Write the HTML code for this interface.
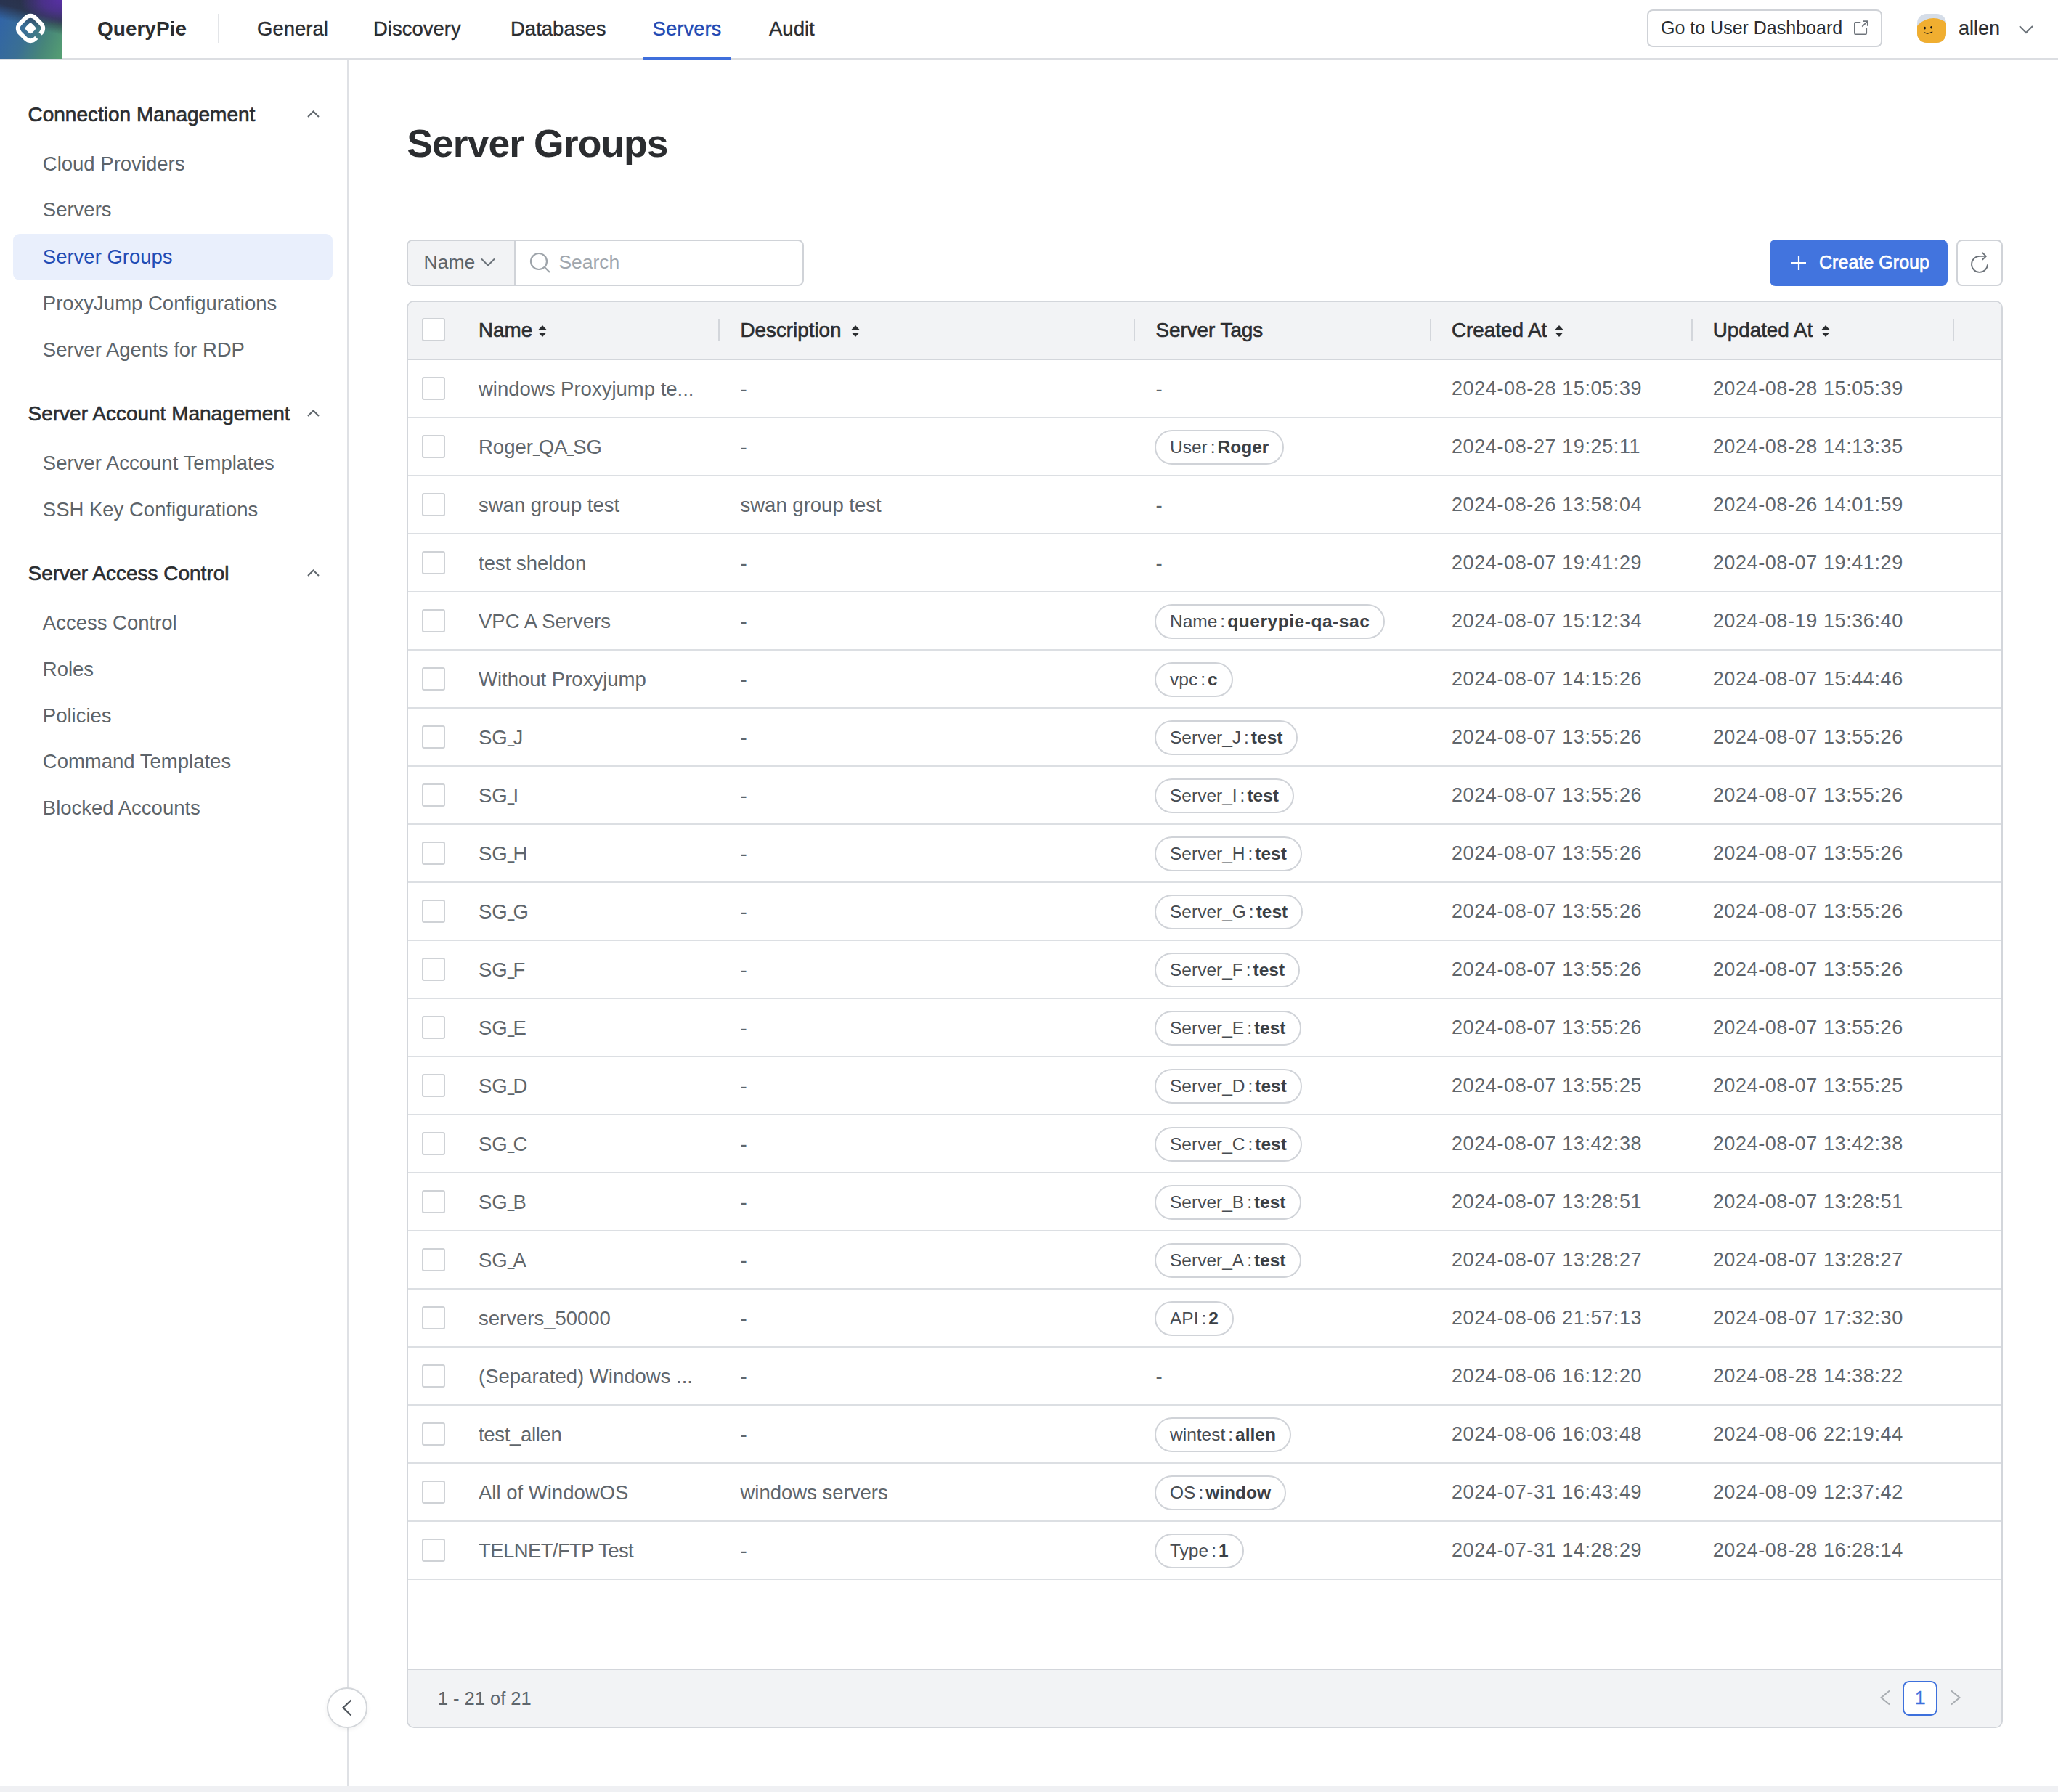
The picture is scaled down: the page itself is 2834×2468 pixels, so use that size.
<!DOCTYPE html>
<html><head><meta charset="utf-8">
<style>
*{box-sizing:border-box;margin:0;padding:0}
html,body{width:2834px;height:2468px;overflow:hidden;background:#fff;font-family:"Liberation Sans",sans-serif}
.t{position:absolute;white-space:nowrap}
.a{position:absolute}
svg{position:absolute;overflow:visible}
.u{display:inline-block;transform:scaleX(.6);transform-origin:0 0;margin-right:-7.5px;position:relative;top:-3px}
</style></head><body>

<div class="a" style="left:0;top:80px;width:2834px;height:2px;background:#dcdee2"></div>
<div class="a" style="left:0;top:0;width:86px;height:81px;background:
radial-gradient(ellipse 80% 50% at 100% 0%, rgba(88,48,165,1) 0%, rgba(88,48,165,0.7) 40%, rgba(88,48,165,0) 85%),
linear-gradient(195deg, rgba(40,44,66,0.95) 0%, rgba(40,44,66,0.85) 27%, rgba(40,44,66,0) 47%),
linear-gradient(112deg, #2f62ab 0%, #3a6f94 45%, #478679 72%, #56a072 100%);"></div>
<svg style="left:0;top:0" width="86" height="81" viewBox="0 0 86 81">
<g transform="rotate(45 42 39)">
<rect x="27.15" y="24.15" width="29.7" height="29.7" rx="9.2" fill="none" stroke="#fff" stroke-width="5.94" stroke-dasharray="27.08 7.5 200" />
<rect x="36.05" y="33.05" width="11.9" height="11.9" rx="3.5" fill="#fff"/>
</g></svg>
<div class="t" style="left:134px;top:22.80px;font-size:28px;line-height:33.6px;color:#2b2d30;font-weight:700;letter-spacing:0px;">QueryPie</div>
<div class="a" style="left:300px;top:19px;width:2px;height:40px;background:#e3e5e8"></div>
<div class="t" style="left:354px;top:23.27px;font-size:27.5px;line-height:33.0px;color:#2b2d30;font-weight:400;letter-spacing:0px;-webkit-text-stroke:0.35px #2b2d30">General</div>
<div class="t" style="left:514px;top:23.27px;font-size:27.5px;line-height:33.0px;color:#2b2d30;font-weight:400;letter-spacing:0px;-webkit-text-stroke:0.35px #2b2d30">Discovery</div>
<div class="t" style="left:703px;top:23.27px;font-size:27.5px;line-height:33.0px;color:#2b2d30;font-weight:400;letter-spacing:0px;-webkit-text-stroke:0.35px #2b2d30">Databases</div>
<div class="t" style="left:898.6px;top:23.27px;font-size:27.5px;line-height:33.0px;color:#2149b3;font-weight:400;letter-spacing:0px;-webkit-text-stroke:0.35px #2149b3">Servers</div>
<div class="t" style="left:1059px;top:23.27px;font-size:27.5px;line-height:33.0px;color:#2b2d30;font-weight:400;letter-spacing:0px;-webkit-text-stroke:0.35px #2b2d30">Audit</div>
<div class="a" style="left:886px;top:78px;width:120px;height:4px;background:#3f6fdc"></div>
<div class="a" style="left:2268px;top:13px;width:324px;height:52px;border:2px solid #cfd2d7;border-radius:8px;background:#fff"></div>
<div class="t" style="left:2287px;top:23.34px;font-size:25px;line-height:30.0px;color:#2b2d30;font-weight:400;letter-spacing:0px;">Go to User Dashboard</div>
<svg style="left:2553px;top:28px" width="20" height="20" viewBox="0 0 20 20">
<path d="M8.6 2.75 H2.3 Q0.8 2.75 0.8 4.25 V17.7 Q0.8 19.2 2.3 19.2 H15.8 Q17.3 19.2 17.3 17.7 V11.1" fill="none" stroke="#6e747b" stroke-width="1.6" stroke-linecap="round"/>
<path d="M12.1 1.1 H18.75 V7.75 M18.75 1.1 L11.25 8.64" fill="none" stroke="#6e747b" stroke-width="1.65"/>
</svg>
<div class="a" style="left:2640px;top:19px;width:40px;height:40px;border-radius:13px;overflow:hidden;background:#d5dde8">
<div class="a" style="left:-5.8px;top:5.9px;width:57.2px;height:57.2px;border-radius:50%;background:#f0ae30"></div>
</div>
<svg style="left:2640px;top:19px" width="40" height="40" viewBox="0 0 40 40">
<ellipse cx="10.5" cy="19.6" rx="1.4" ry="1.9" fill="#111"/>
<ellipse cx="19.6" cy="18.8" rx="1.4" ry="1.8" fill="#111"/>
<path d="M10.6 26 Q14.5 28.3 20.7 25" fill="none" stroke="#111" stroke-width="1.4" stroke-linecap="round"/></svg>
<div class="t" style="left:2697px;top:23.44px;font-size:27px;line-height:32.4px;color:#2b2d30;font-weight:400;letter-spacing:0px;-webkit-text-stroke:0.2px #2b2d30">allen</div>
<svg style="left:2780px;top:35px" width="20" height="11" viewBox="0 0 20 11">
<path d="M1 1 L10 10 L19 1" fill="none" stroke="#6c737a" stroke-width="2"/></svg>
<div class="a" style="left:478px;top:82px;width:2px;height:2378px;background:#dfe1e5"></div>
<div class="a" style="left:18px;top:322px;width:440px;height:64px;border-radius:9px;background:#e9effc"></div>
<div class="t" style="left:38.5px;top:141.30px;font-size:28px;line-height:33.6px;color:#2b2d30;font-weight:400;letter-spacing:0px;-webkit-text-stroke:0.65px #2b2d30">Connection Management</div>
<svg style="left:423px;top:152.3px" width="17" height="10" viewBox="0 0 17 10"><path d="M1 9 L8.5 1.5 L16 9" fill="none" stroke="#5f666c" stroke-width="2"/></svg>
<div class="t" style="left:38.5px;top:552.90px;font-size:28px;line-height:33.6px;color:#2b2d30;font-weight:400;letter-spacing:0px;-webkit-text-stroke:0.65px #2b2d30">Server Account Management</div>
<svg style="left:423px;top:563.9px" width="17" height="10" viewBox="0 0 17 10"><path d="M1 9 L8.5 1.5 L16 9" fill="none" stroke="#5f666c" stroke-width="2"/></svg>
<div class="t" style="left:38.5px;top:773.00px;font-size:28px;line-height:33.6px;color:#2b2d30;font-weight:400;letter-spacing:0px;-webkit-text-stroke:0.65px #2b2d30">Server Access Control</div>
<svg style="left:423px;top:784.0px" width="17" height="10" viewBox="0 0 17 10"><path d="M1 9 L8.5 1.5 L16 9" fill="none" stroke="#5f666c" stroke-width="2"/></svg>
<div class="t" style="left:58.8px;top:208.67px;font-size:27.5px;line-height:33.0px;color:#5d646a;font-weight:400;letter-spacing:0px;">Cloud Providers</div>
<div class="t" style="left:58.8px;top:272.37px;font-size:27.5px;line-height:33.0px;color:#5d646a;font-weight:400;letter-spacing:0px;">Servers</div>
<div class="t" style="left:58.8px;top:336.57px;font-size:27.5px;line-height:33.0px;color:#1f4cb5;font-weight:400;letter-spacing:0px;">Server Groups</div>
<div class="t" style="left:58.8px;top:400.57px;font-size:27.5px;line-height:33.0px;color:#5d646a;font-weight:400;letter-spacing:0px;">ProxyJump Configurations</div>
<div class="t" style="left:58.8px;top:464.77px;font-size:27.5px;line-height:33.0px;color:#5d646a;font-weight:400;letter-spacing:0px;">Server Agents for RDP</div>
<div class="t" style="left:58.8px;top:620.57px;font-size:27.5px;line-height:33.0px;color:#5d646a;font-weight:400;letter-spacing:0px;">Server Account Templates</div>
<div class="t" style="left:58.8px;top:684.67px;font-size:27.5px;line-height:33.0px;color:#5d646a;font-weight:400;letter-spacing:0px;">SSH Key Configurations</div>
<div class="t" style="left:58.8px;top:840.97px;font-size:27.5px;line-height:33.0px;color:#5d646a;font-weight:400;letter-spacing:0px;">Access Control</div>
<div class="t" style="left:58.8px;top:905.27px;font-size:27.5px;line-height:33.0px;color:#5d646a;font-weight:400;letter-spacing:0px;">Roles</div>
<div class="t" style="left:58.8px;top:968.97px;font-size:27.5px;line-height:33.0px;color:#5d646a;font-weight:400;letter-spacing:0px;">Policies</div>
<div class="t" style="left:58.8px;top:1032.37px;font-size:27.5px;line-height:33.0px;color:#5d646a;font-weight:400;letter-spacing:0px;">Command Templates</div>
<div class="t" style="left:58.8px;top:1096.47px;font-size:27.5px;line-height:33.0px;color:#5d646a;font-weight:400;letter-spacing:0px;">Blocked Accounts</div>
<div class="a" style="left:450px;top:2324px;width:56px;height:56px;border-radius:50%;border:2px solid #d3d6da;background:#fff;box-shadow:0 2px 6px rgba(0,0,0,0.06)"></div>
<svg style="left:470px;top:2340px" width="16" height="24" viewBox="0 0 16 24">
<path d="M13.5 1.5 L2.5 12 L13.5 22.5" fill="none" stroke="#50565d" stroke-width="2.2"/></svg>
<div class="a" style="left:0;top:2460px;width:2834px;height:8px;background:#eff0f3"></div>
<div class="t" style="left:560.3px;top:166.36px;font-size:53.5px;line-height:64.2px;color:#2b2d30;font-weight:700;letter-spacing:-0.95px;">Server Groups</div>
<div class="a" style="left:560px;top:330px;width:547px;height:64px;border:2px solid #d0d3d8;border-radius:8px;background:#fff;overflow:hidden"><div class="a" style="left:0;top:0;width:148px;height:60px;background:#f2f3f5;border-right:2px solid #d0d3d8"></div></div>
<div class="t" style="left:583.5px;top:345.92px;font-size:26.5px;line-height:31.8px;color:#5d646a;font-weight:400;letter-spacing:0px;">Name</div>
<svg style="left:662px;top:355px" width="20" height="12" viewBox="0 0 20 12">
<path d="M1 1.5 L10 10.5 L19 1.5" fill="none" stroke="#6c737a" stroke-width="2"/></svg>
<svg style="left:728px;top:346px" width="32" height="32" viewBox="0 0 32 32">
<circle cx="14" cy="14" r="11" fill="none" stroke="#9ea4aa" stroke-width="2.2"/>
<path d="M22 22 L29 29" stroke="#9ea4aa" stroke-width="2.2"/></svg>
<div class="t" style="left:769.4px;top:345.92px;font-size:26.5px;line-height:31.8px;color:#a0a6ad;font-weight:400;letter-spacing:0px;">Search</div>
<div class="a" style="left:2437px;top:330px;width:245px;height:64px;border-radius:8px;background:#4274de"></div>
<svg style="left:2467px;top:352px" width="20" height="20" viewBox="0 0 20 20">
<path d="M10 0 V20 M0 10 H20" stroke="#fff" stroke-width="2.2"/></svg>
<div class="t" style="left:2505px;top:346.24px;font-size:25.1px;line-height:30.12px;color:#ffffff;font-weight:400;letter-spacing:0px;-webkit-text-stroke:0.6px #fff">Create Group</div>
<div class="a" style="left:2694px;top:330px;width:64px;height:64px;border:2px solid #d0d3d8;border-radius:8px;background:#fff"></div>
<svg style="left:2712px;top:346px" width="30" height="32" viewBox="0 0 30 32">
<path d="M25 18.3 A11 11 0 1 1 14 6.9 L22.6 6.9" fill="none" stroke="#6b7178" stroke-width="1.85"/>
<path d="M17.8 1.9 L22.8 6.9 L17.8 11.9" fill="none" stroke="#6b7178" stroke-width="1.85"/></svg>
<div class="a" style="left:560px;top:414px;width:2198px;height:1966px;border:2px solid #d3d6db;border-radius:10px;background:#fff;overflow:hidden"><div class="a" style="left:0;top:0;width:100%;height:80px;background:#f2f3f5;border-bottom:2px solid #d3d6db"></div><div class="a" style="left:0;top:1882px;width:100%;height:80px;background:#f2f3f5;border-top:2px solid #d3d6db"></div></div>
<div class="a" style="left:581px;top:438px;width:32px;height:32px;border:2px solid #cfd2d6;border-radius:3px;background:#fff"></div>
<div class="t" style="left:659px;top:437.69px;font-size:27.8px;line-height:33.36px;color:#2b2d30;font-weight:400;letter-spacing:0px;-webkit-text-stroke:0.65px #2b2d30">Name</div>
<div class="t" style="left:1019.5px;top:437.69px;font-size:27.8px;line-height:33.36px;color:#2b2d30;font-weight:400;letter-spacing:0px;-webkit-text-stroke:0.65px #2b2d30">Description</div>
<div class="t" style="left:1591.4px;top:437.69px;font-size:27.8px;line-height:33.36px;color:#2b2d30;font-weight:400;letter-spacing:0px;-webkit-text-stroke:0.65px #2b2d30">Server Tags</div>
<div class="t" style="left:1999px;top:437.69px;font-size:27.8px;line-height:33.36px;color:#2b2d30;font-weight:400;letter-spacing:0px;-webkit-text-stroke:0.65px #2b2d30">Created At</div>
<div class="t" style="left:2358.7px;top:437.69px;font-size:27.8px;line-height:33.36px;color:#2b2d30;font-weight:400;letter-spacing:0px;-webkit-text-stroke:0.65px #2b2d30">Updated At</div>
<div class="a" style="left:989px;top:440px;width:2px;height:30px;background:#d3d6db"></div>
<div class="a" style="left:1561px;top:440px;width:2px;height:30px;background:#d3d6db"></div>
<div class="a" style="left:1969px;top:440px;width:2px;height:30px;background:#d3d6db"></div>
<div class="a" style="left:2329px;top:440px;width:2px;height:30px;background:#d3d6db"></div>
<div class="a" style="left:2689px;top:440px;width:2px;height:30px;background:#d3d6db"></div>
<svg style="left:741px;top:448px" width="12" height="16" viewBox="0 0 12 16"><path d="M6 0 L11.5 6 H0.5 Z M0.5 10 H11.5 L6 16 Z" fill="#2b2d30"/></svg>
<svg style="left:1172px;top:448px" width="12" height="16" viewBox="0 0 12 16"><path d="M6 0 L11.5 6 H0.5 Z M0.5 10 H11.5 L6 16 Z" fill="#2b2d30"/></svg>
<svg style="left:2141.4px;top:448px" width="12" height="16" viewBox="0 0 12 16"><path d="M6 0 L11.5 6 H0.5 Z M0.5 10 H11.5 L6 16 Z" fill="#2b2d30"/></svg>
<svg style="left:2508px;top:448px" width="12" height="16" viewBox="0 0 12 16"><path d="M6 0 L11.5 6 H0.5 Z M0.5 10 H11.5 L6 16 Z" fill="#2b2d30"/></svg>
<div class="a" style="left:562px;top:574px;width:2194px;height:2px;background:#dcdfe3"></div>
<div class="a" style="left:581px;top:519px;width:32px;height:32px;border:2px solid #cfd2d6;border-radius:3px;background:#fff"></div>
<div class="t" style="left:659px;top:518.97px;font-size:27.5px;line-height:33.0px;color:#5f666c;font-weight:400;letter-spacing:0px;">windows Proxyjump te...</div>
<div class="t" style="left:1019.5px;top:518.97px;font-size:27.5px;line-height:33.0px;color:#5f666c;font-weight:400;letter-spacing:0px;">-</div>
<div class="t" style="left:1591.4px;top:518.97px;font-size:27.5px;line-height:33.0px;color:#5f666c;font-weight:400;letter-spacing:0px;">-</div>
<div class="t" style="left:1999px;top:519.44px;font-size:27px;line-height:32.4px;color:#5f666c;font-weight:400;letter-spacing:0.6px;">2024-08-28 15:05:39</div>
<div class="t" style="left:2358.7px;top:519.44px;font-size:27px;line-height:32.4px;color:#5f666c;font-weight:400;letter-spacing:0.6px;">2024-08-28 15:05:39</div>
<div class="a" style="left:562px;top:654px;width:2194px;height:2px;background:#dcdfe3"></div>
<div class="a" style="left:581px;top:599px;width:32px;height:32px;border:2px solid #cfd2d6;border-radius:3px;background:#fff"></div>
<div class="t" style="left:659px;top:598.97px;font-size:27.5px;line-height:33.0px;color:#5f666c;font-weight:400;letter-spacing:0px;">Roger<span class="u">_</span>QA<span class="u">_</span>SG</div>
<div class="t" style="left:1019.5px;top:598.97px;font-size:27.5px;line-height:33.0px;color:#5f666c;font-weight:400;letter-spacing:0px;">-</div>
<div class="a" style="left:1590px;top:592px;height:48px;border:2px solid #d0d3d8;border-radius:24px;padding:0 19px;display:flex;align-items:center;white-space:nowrap;font-size:24.5px;background:#fff"><span style="color:#474c52">User</span><span style="color:#474c52;margin:0 3px 0 4px">:</span><span style="color:#3b4045;font-weight:700;letter-spacing:0px">Roger</span></div>
<div class="t" style="left:1999px;top:599.44px;font-size:27px;line-height:32.4px;color:#5f666c;font-weight:400;letter-spacing:0.6px;">2024-08-27 19:25:11</div>
<div class="t" style="left:2358.7px;top:599.44px;font-size:27px;line-height:32.4px;color:#5f666c;font-weight:400;letter-spacing:0.6px;">2024-08-28 14:13:35</div>
<div class="a" style="left:562px;top:734px;width:2194px;height:2px;background:#dcdfe3"></div>
<div class="a" style="left:581px;top:679px;width:32px;height:32px;border:2px solid #cfd2d6;border-radius:3px;background:#fff"></div>
<div class="t" style="left:659px;top:678.97px;font-size:27.5px;line-height:33.0px;color:#5f666c;font-weight:400;letter-spacing:0px;">swan group test</div>
<div class="t" style="left:1019.5px;top:678.97px;font-size:27.5px;line-height:33.0px;color:#5f666c;font-weight:400;letter-spacing:0px;">swan group test</div>
<div class="t" style="left:1591.4px;top:678.97px;font-size:27.5px;line-height:33.0px;color:#5f666c;font-weight:400;letter-spacing:0px;">-</div>
<div class="t" style="left:1999px;top:679.44px;font-size:27px;line-height:32.4px;color:#5f666c;font-weight:400;letter-spacing:0.6px;">2024-08-26 13:58:04</div>
<div class="t" style="left:2358.7px;top:679.44px;font-size:27px;line-height:32.4px;color:#5f666c;font-weight:400;letter-spacing:0.6px;">2024-08-26 14:01:59</div>
<div class="a" style="left:562px;top:814px;width:2194px;height:2px;background:#dcdfe3"></div>
<div class="a" style="left:581px;top:759px;width:32px;height:32px;border:2px solid #cfd2d6;border-radius:3px;background:#fff"></div>
<div class="t" style="left:659px;top:758.97px;font-size:27.5px;line-height:33.0px;color:#5f666c;font-weight:400;letter-spacing:0px;">test sheldon</div>
<div class="t" style="left:1019.5px;top:758.97px;font-size:27.5px;line-height:33.0px;color:#5f666c;font-weight:400;letter-spacing:0px;">-</div>
<div class="t" style="left:1591.4px;top:758.97px;font-size:27.5px;line-height:33.0px;color:#5f666c;font-weight:400;letter-spacing:0px;">-</div>
<div class="t" style="left:1999px;top:759.44px;font-size:27px;line-height:32.4px;color:#5f666c;font-weight:400;letter-spacing:0.6px;">2024-08-07 19:41:29</div>
<div class="t" style="left:2358.7px;top:759.44px;font-size:27px;line-height:32.4px;color:#5f666c;font-weight:400;letter-spacing:0.6px;">2024-08-07 19:41:29</div>
<div class="a" style="left:562px;top:894px;width:2194px;height:2px;background:#dcdfe3"></div>
<div class="a" style="left:581px;top:839px;width:32px;height:32px;border:2px solid #cfd2d6;border-radius:3px;background:#fff"></div>
<div class="t" style="left:659px;top:838.97px;font-size:27.5px;line-height:33.0px;color:#5f666c;font-weight:400;letter-spacing:0px;">VPC A Servers</div>
<div class="t" style="left:1019.5px;top:838.97px;font-size:27.5px;line-height:33.0px;color:#5f666c;font-weight:400;letter-spacing:0px;">-</div>
<div class="a" style="left:1590px;top:832px;height:48px;border:2px solid #d0d3d8;border-radius:24px;padding:0 19px;display:flex;align-items:center;white-space:nowrap;font-size:24.5px;background:#fff"><span style="color:#474c52">Name</span><span style="color:#474c52;margin:0 3px 0 4px">:</span><span style="color:#3b4045;font-weight:700;letter-spacing:0.55px">querypie-qa-sac</span></div>
<div class="t" style="left:1999px;top:839.44px;font-size:27px;line-height:32.4px;color:#5f666c;font-weight:400;letter-spacing:0.6px;">2024-08-07 15:12:34</div>
<div class="t" style="left:2358.7px;top:839.44px;font-size:27px;line-height:32.4px;color:#5f666c;font-weight:400;letter-spacing:0.6px;">2024-08-19 15:36:40</div>
<div class="a" style="left:562px;top:974px;width:2194px;height:2px;background:#dcdfe3"></div>
<div class="a" style="left:581px;top:919px;width:32px;height:32px;border:2px solid #cfd2d6;border-radius:3px;background:#fff"></div>
<div class="t" style="left:659px;top:918.97px;font-size:27.5px;line-height:33.0px;color:#5f666c;font-weight:400;letter-spacing:0px;">Without Proxyjump</div>
<div class="t" style="left:1019.5px;top:918.97px;font-size:27.5px;line-height:33.0px;color:#5f666c;font-weight:400;letter-spacing:0px;">-</div>
<div class="a" style="left:1590px;top:912px;height:48px;border:2px solid #d0d3d8;border-radius:24px;padding:0 19px;display:flex;align-items:center;white-space:nowrap;font-size:24.5px;background:#fff"><span style="color:#474c52">vpc</span><span style="color:#474c52;margin:0 3px 0 4px">:</span><span style="color:#3b4045;font-weight:700;letter-spacing:0px">c</span></div>
<div class="t" style="left:1999px;top:919.44px;font-size:27px;line-height:32.4px;color:#5f666c;font-weight:400;letter-spacing:0.6px;">2024-08-07 14:15:26</div>
<div class="t" style="left:2358.7px;top:919.44px;font-size:27px;line-height:32.4px;color:#5f666c;font-weight:400;letter-spacing:0.6px;">2024-08-07 15:44:46</div>
<div class="a" style="left:562px;top:1054px;width:2194px;height:2px;background:#dcdfe3"></div>
<div class="a" style="left:581px;top:999px;width:32px;height:32px;border:2px solid #cfd2d6;border-radius:3px;background:#fff"></div>
<div class="t" style="left:659px;top:998.97px;font-size:27.5px;line-height:33.0px;color:#5f666c;font-weight:400;letter-spacing:0px;">SG<span class="u">_</span>J</div>
<div class="t" style="left:1019.5px;top:998.97px;font-size:27.5px;line-height:33.0px;color:#5f666c;font-weight:400;letter-spacing:0px;">-</div>
<div class="a" style="left:1590px;top:992px;height:48px;border:2px solid #d0d3d8;border-radius:24px;padding:0 19px;display:flex;align-items:center;white-space:nowrap;font-size:24.5px;background:#fff"><span style="color:#474c52">Server_J</span><span style="color:#474c52;margin:0 3px 0 4px">:</span><span style="color:#3b4045;font-weight:700;letter-spacing:0px">test</span></div>
<div class="t" style="left:1999px;top:999.44px;font-size:27px;line-height:32.4px;color:#5f666c;font-weight:400;letter-spacing:0.6px;">2024-08-07 13:55:26</div>
<div class="t" style="left:2358.7px;top:999.44px;font-size:27px;line-height:32.4px;color:#5f666c;font-weight:400;letter-spacing:0.6px;">2024-08-07 13:55:26</div>
<div class="a" style="left:562px;top:1134px;width:2194px;height:2px;background:#dcdfe3"></div>
<div class="a" style="left:581px;top:1079px;width:32px;height:32px;border:2px solid #cfd2d6;border-radius:3px;background:#fff"></div>
<div class="t" style="left:659px;top:1078.97px;font-size:27.5px;line-height:33.0px;color:#5f666c;font-weight:400;letter-spacing:0px;">SG<span class="u">_</span>I</div>
<div class="t" style="left:1019.5px;top:1078.97px;font-size:27.5px;line-height:33.0px;color:#5f666c;font-weight:400;letter-spacing:0px;">-</div>
<div class="a" style="left:1590px;top:1072px;height:48px;border:2px solid #d0d3d8;border-radius:24px;padding:0 19px;display:flex;align-items:center;white-space:nowrap;font-size:24.5px;background:#fff"><span style="color:#474c52">Server_I</span><span style="color:#474c52;margin:0 3px 0 4px">:</span><span style="color:#3b4045;font-weight:700;letter-spacing:0px">test</span></div>
<div class="t" style="left:1999px;top:1079.44px;font-size:27px;line-height:32.4px;color:#5f666c;font-weight:400;letter-spacing:0.6px;">2024-08-07 13:55:26</div>
<div class="t" style="left:2358.7px;top:1079.44px;font-size:27px;line-height:32.4px;color:#5f666c;font-weight:400;letter-spacing:0.6px;">2024-08-07 13:55:26</div>
<div class="a" style="left:562px;top:1214px;width:2194px;height:2px;background:#dcdfe3"></div>
<div class="a" style="left:581px;top:1159px;width:32px;height:32px;border:2px solid #cfd2d6;border-radius:3px;background:#fff"></div>
<div class="t" style="left:659px;top:1158.97px;font-size:27.5px;line-height:33.0px;color:#5f666c;font-weight:400;letter-spacing:0px;">SG<span class="u">_</span>H</div>
<div class="t" style="left:1019.5px;top:1158.97px;font-size:27.5px;line-height:33.0px;color:#5f666c;font-weight:400;letter-spacing:0px;">-</div>
<div class="a" style="left:1590px;top:1152px;height:48px;border:2px solid #d0d3d8;border-radius:24px;padding:0 19px;display:flex;align-items:center;white-space:nowrap;font-size:24.5px;background:#fff"><span style="color:#474c52">Server_H</span><span style="color:#474c52;margin:0 3px 0 4px">:</span><span style="color:#3b4045;font-weight:700;letter-spacing:0px">test</span></div>
<div class="t" style="left:1999px;top:1159.44px;font-size:27px;line-height:32.4px;color:#5f666c;font-weight:400;letter-spacing:0.6px;">2024-08-07 13:55:26</div>
<div class="t" style="left:2358.7px;top:1159.44px;font-size:27px;line-height:32.4px;color:#5f666c;font-weight:400;letter-spacing:0.6px;">2024-08-07 13:55:26</div>
<div class="a" style="left:562px;top:1294px;width:2194px;height:2px;background:#dcdfe3"></div>
<div class="a" style="left:581px;top:1239px;width:32px;height:32px;border:2px solid #cfd2d6;border-radius:3px;background:#fff"></div>
<div class="t" style="left:659px;top:1238.97px;font-size:27.5px;line-height:33.0px;color:#5f666c;font-weight:400;letter-spacing:0px;">SG<span class="u">_</span>G</div>
<div class="t" style="left:1019.5px;top:1238.97px;font-size:27.5px;line-height:33.0px;color:#5f666c;font-weight:400;letter-spacing:0px;">-</div>
<div class="a" style="left:1590px;top:1232px;height:48px;border:2px solid #d0d3d8;border-radius:24px;padding:0 19px;display:flex;align-items:center;white-space:nowrap;font-size:24.5px;background:#fff"><span style="color:#474c52">Server_G</span><span style="color:#474c52;margin:0 3px 0 4px">:</span><span style="color:#3b4045;font-weight:700;letter-spacing:0px">test</span></div>
<div class="t" style="left:1999px;top:1239.44px;font-size:27px;line-height:32.4px;color:#5f666c;font-weight:400;letter-spacing:0.6px;">2024-08-07 13:55:26</div>
<div class="t" style="left:2358.7px;top:1239.44px;font-size:27px;line-height:32.4px;color:#5f666c;font-weight:400;letter-spacing:0.6px;">2024-08-07 13:55:26</div>
<div class="a" style="left:562px;top:1374px;width:2194px;height:2px;background:#dcdfe3"></div>
<div class="a" style="left:581px;top:1319px;width:32px;height:32px;border:2px solid #cfd2d6;border-radius:3px;background:#fff"></div>
<div class="t" style="left:659px;top:1318.97px;font-size:27.5px;line-height:33.0px;color:#5f666c;font-weight:400;letter-spacing:0px;">SG<span class="u">_</span>F</div>
<div class="t" style="left:1019.5px;top:1318.97px;font-size:27.5px;line-height:33.0px;color:#5f666c;font-weight:400;letter-spacing:0px;">-</div>
<div class="a" style="left:1590px;top:1312px;height:48px;border:2px solid #d0d3d8;border-radius:24px;padding:0 19px;display:flex;align-items:center;white-space:nowrap;font-size:24.5px;background:#fff"><span style="color:#474c52">Server_F</span><span style="color:#474c52;margin:0 3px 0 4px">:</span><span style="color:#3b4045;font-weight:700;letter-spacing:0px">test</span></div>
<div class="t" style="left:1999px;top:1319.44px;font-size:27px;line-height:32.4px;color:#5f666c;font-weight:400;letter-spacing:0.6px;">2024-08-07 13:55:26</div>
<div class="t" style="left:2358.7px;top:1319.44px;font-size:27px;line-height:32.4px;color:#5f666c;font-weight:400;letter-spacing:0.6px;">2024-08-07 13:55:26</div>
<div class="a" style="left:562px;top:1454px;width:2194px;height:2px;background:#dcdfe3"></div>
<div class="a" style="left:581px;top:1399px;width:32px;height:32px;border:2px solid #cfd2d6;border-radius:3px;background:#fff"></div>
<div class="t" style="left:659px;top:1398.97px;font-size:27.5px;line-height:33.0px;color:#5f666c;font-weight:400;letter-spacing:0px;">SG<span class="u">_</span>E</div>
<div class="t" style="left:1019.5px;top:1398.97px;font-size:27.5px;line-height:33.0px;color:#5f666c;font-weight:400;letter-spacing:0px;">-</div>
<div class="a" style="left:1590px;top:1392px;height:48px;border:2px solid #d0d3d8;border-radius:24px;padding:0 19px;display:flex;align-items:center;white-space:nowrap;font-size:24.5px;background:#fff"><span style="color:#474c52">Server_E</span><span style="color:#474c52;margin:0 3px 0 4px">:</span><span style="color:#3b4045;font-weight:700;letter-spacing:0px">test</span></div>
<div class="t" style="left:1999px;top:1399.44px;font-size:27px;line-height:32.4px;color:#5f666c;font-weight:400;letter-spacing:0.6px;">2024-08-07 13:55:26</div>
<div class="t" style="left:2358.7px;top:1399.44px;font-size:27px;line-height:32.4px;color:#5f666c;font-weight:400;letter-spacing:0.6px;">2024-08-07 13:55:26</div>
<div class="a" style="left:562px;top:1534px;width:2194px;height:2px;background:#dcdfe3"></div>
<div class="a" style="left:581px;top:1479px;width:32px;height:32px;border:2px solid #cfd2d6;border-radius:3px;background:#fff"></div>
<div class="t" style="left:659px;top:1478.97px;font-size:27.5px;line-height:33.0px;color:#5f666c;font-weight:400;letter-spacing:0px;">SG<span class="u">_</span>D</div>
<div class="t" style="left:1019.5px;top:1478.97px;font-size:27.5px;line-height:33.0px;color:#5f666c;font-weight:400;letter-spacing:0px;">-</div>
<div class="a" style="left:1590px;top:1472px;height:48px;border:2px solid #d0d3d8;border-radius:24px;padding:0 19px;display:flex;align-items:center;white-space:nowrap;font-size:24.5px;background:#fff"><span style="color:#474c52">Server_D</span><span style="color:#474c52;margin:0 3px 0 4px">:</span><span style="color:#3b4045;font-weight:700;letter-spacing:0px">test</span></div>
<div class="t" style="left:1999px;top:1479.44px;font-size:27px;line-height:32.4px;color:#5f666c;font-weight:400;letter-spacing:0.6px;">2024-08-07 13:55:25</div>
<div class="t" style="left:2358.7px;top:1479.44px;font-size:27px;line-height:32.4px;color:#5f666c;font-weight:400;letter-spacing:0.6px;">2024-08-07 13:55:25</div>
<div class="a" style="left:562px;top:1614px;width:2194px;height:2px;background:#dcdfe3"></div>
<div class="a" style="left:581px;top:1559px;width:32px;height:32px;border:2px solid #cfd2d6;border-radius:3px;background:#fff"></div>
<div class="t" style="left:659px;top:1558.97px;font-size:27.5px;line-height:33.0px;color:#5f666c;font-weight:400;letter-spacing:0px;">SG<span class="u">_</span>C</div>
<div class="t" style="left:1019.5px;top:1558.97px;font-size:27.5px;line-height:33.0px;color:#5f666c;font-weight:400;letter-spacing:0px;">-</div>
<div class="a" style="left:1590px;top:1552px;height:48px;border:2px solid #d0d3d8;border-radius:24px;padding:0 19px;display:flex;align-items:center;white-space:nowrap;font-size:24.5px;background:#fff"><span style="color:#474c52">Server_C</span><span style="color:#474c52;margin:0 3px 0 4px">:</span><span style="color:#3b4045;font-weight:700;letter-spacing:0px">test</span></div>
<div class="t" style="left:1999px;top:1559.44px;font-size:27px;line-height:32.4px;color:#5f666c;font-weight:400;letter-spacing:0.6px;">2024-08-07 13:42:38</div>
<div class="t" style="left:2358.7px;top:1559.44px;font-size:27px;line-height:32.4px;color:#5f666c;font-weight:400;letter-spacing:0.6px;">2024-08-07 13:42:38</div>
<div class="a" style="left:562px;top:1694px;width:2194px;height:2px;background:#dcdfe3"></div>
<div class="a" style="left:581px;top:1639px;width:32px;height:32px;border:2px solid #cfd2d6;border-radius:3px;background:#fff"></div>
<div class="t" style="left:659px;top:1638.97px;font-size:27.5px;line-height:33.0px;color:#5f666c;font-weight:400;letter-spacing:0px;">SG<span class="u">_</span>B</div>
<div class="t" style="left:1019.5px;top:1638.97px;font-size:27.5px;line-height:33.0px;color:#5f666c;font-weight:400;letter-spacing:0px;">-</div>
<div class="a" style="left:1590px;top:1632px;height:48px;border:2px solid #d0d3d8;border-radius:24px;padding:0 19px;display:flex;align-items:center;white-space:nowrap;font-size:24.5px;background:#fff"><span style="color:#474c52">Server_B</span><span style="color:#474c52;margin:0 3px 0 4px">:</span><span style="color:#3b4045;font-weight:700;letter-spacing:0px">test</span></div>
<div class="t" style="left:1999px;top:1639.44px;font-size:27px;line-height:32.4px;color:#5f666c;font-weight:400;letter-spacing:0.6px;">2024-08-07 13:28:51</div>
<div class="t" style="left:2358.7px;top:1639.44px;font-size:27px;line-height:32.4px;color:#5f666c;font-weight:400;letter-spacing:0.6px;">2024-08-07 13:28:51</div>
<div class="a" style="left:562px;top:1774px;width:2194px;height:2px;background:#dcdfe3"></div>
<div class="a" style="left:581px;top:1719px;width:32px;height:32px;border:2px solid #cfd2d6;border-radius:3px;background:#fff"></div>
<div class="t" style="left:659px;top:1718.97px;font-size:27.5px;line-height:33.0px;color:#5f666c;font-weight:400;letter-spacing:0px;">SG<span class="u">_</span>A</div>
<div class="t" style="left:1019.5px;top:1718.97px;font-size:27.5px;line-height:33.0px;color:#5f666c;font-weight:400;letter-spacing:0px;">-</div>
<div class="a" style="left:1590px;top:1712px;height:48px;border:2px solid #d0d3d8;border-radius:24px;padding:0 19px;display:flex;align-items:center;white-space:nowrap;font-size:24.5px;background:#fff"><span style="color:#474c52">Server_A</span><span style="color:#474c52;margin:0 3px 0 4px">:</span><span style="color:#3b4045;font-weight:700;letter-spacing:0px">test</span></div>
<div class="t" style="left:1999px;top:1719.44px;font-size:27px;line-height:32.4px;color:#5f666c;font-weight:400;letter-spacing:0.6px;">2024-08-07 13:28:27</div>
<div class="t" style="left:2358.7px;top:1719.44px;font-size:27px;line-height:32.4px;color:#5f666c;font-weight:400;letter-spacing:0.6px;">2024-08-07 13:28:27</div>
<div class="a" style="left:562px;top:1854px;width:2194px;height:2px;background:#dcdfe3"></div>
<div class="a" style="left:581px;top:1799px;width:32px;height:32px;border:2px solid #cfd2d6;border-radius:3px;background:#fff"></div>
<div class="t" style="left:659px;top:1798.97px;font-size:27.5px;line-height:33.0px;color:#5f666c;font-weight:400;letter-spacing:0px;">servers_50000</div>
<div class="t" style="left:1019.5px;top:1798.97px;font-size:27.5px;line-height:33.0px;color:#5f666c;font-weight:400;letter-spacing:0px;">-</div>
<div class="a" style="left:1590px;top:1792px;height:48px;border:2px solid #d0d3d8;border-radius:24px;padding:0 19px;display:flex;align-items:center;white-space:nowrap;font-size:24.5px;background:#fff"><span style="color:#474c52">API</span><span style="color:#474c52;margin:0 3px 0 4px">:</span><span style="color:#3b4045;font-weight:700;letter-spacing:0px">2</span></div>
<div class="t" style="left:1999px;top:1799.44px;font-size:27px;line-height:32.4px;color:#5f666c;font-weight:400;letter-spacing:0.6px;">2024-08-06 21:57:13</div>
<div class="t" style="left:2358.7px;top:1799.44px;font-size:27px;line-height:32.4px;color:#5f666c;font-weight:400;letter-spacing:0.6px;">2024-08-07 17:32:30</div>
<div class="a" style="left:562px;top:1934px;width:2194px;height:2px;background:#dcdfe3"></div>
<div class="a" style="left:581px;top:1879px;width:32px;height:32px;border:2px solid #cfd2d6;border-radius:3px;background:#fff"></div>
<div class="t" style="left:659px;top:1878.97px;font-size:27.5px;line-height:33.0px;color:#5f666c;font-weight:400;letter-spacing:0px;">(Separated) Windows ...</div>
<div class="t" style="left:1019.5px;top:1878.97px;font-size:27.5px;line-height:33.0px;color:#5f666c;font-weight:400;letter-spacing:0px;">-</div>
<div class="t" style="left:1591.4px;top:1878.97px;font-size:27.5px;line-height:33.0px;color:#5f666c;font-weight:400;letter-spacing:0px;">-</div>
<div class="t" style="left:1999px;top:1879.44px;font-size:27px;line-height:32.4px;color:#5f666c;font-weight:400;letter-spacing:0.6px;">2024-08-06 16:12:20</div>
<div class="t" style="left:2358.7px;top:1879.44px;font-size:27px;line-height:32.4px;color:#5f666c;font-weight:400;letter-spacing:0.6px;">2024-08-28 14:38:22</div>
<div class="a" style="left:562px;top:2014px;width:2194px;height:2px;background:#dcdfe3"></div>
<div class="a" style="left:581px;top:1959px;width:32px;height:32px;border:2px solid #cfd2d6;border-radius:3px;background:#fff"></div>
<div class="t" style="left:659px;top:1958.97px;font-size:27.5px;line-height:33.0px;color:#5f666c;font-weight:400;letter-spacing:-0.33px;">test_allen</div>
<div class="t" style="left:1019.5px;top:1958.97px;font-size:27.5px;line-height:33.0px;color:#5f666c;font-weight:400;letter-spacing:0px;">-</div>
<div class="a" style="left:1590px;top:1952px;height:48px;border:2px solid #d0d3d8;border-radius:24px;padding:0 19px;display:flex;align-items:center;white-space:nowrap;font-size:24.5px;background:#fff"><span style="color:#474c52">wintest</span><span style="color:#474c52;margin:0 3px 0 4px">:</span><span style="color:#3b4045;font-weight:700;letter-spacing:0px">allen</span></div>
<div class="t" style="left:1999px;top:1959.44px;font-size:27px;line-height:32.4px;color:#5f666c;font-weight:400;letter-spacing:0.6px;">2024-08-06 16:03:48</div>
<div class="t" style="left:2358.7px;top:1959.44px;font-size:27px;line-height:32.4px;color:#5f666c;font-weight:400;letter-spacing:0.6px;">2024-08-06 22:19:44</div>
<div class="a" style="left:562px;top:2094px;width:2194px;height:2px;background:#dcdfe3"></div>
<div class="a" style="left:581px;top:2039px;width:32px;height:32px;border:2px solid #cfd2d6;border-radius:3px;background:#fff"></div>
<div class="t" style="left:659px;top:2038.97px;font-size:27.5px;line-height:33.0px;color:#5f666c;font-weight:400;letter-spacing:0px;">All of WindowOS</div>
<div class="t" style="left:1019.5px;top:2038.97px;font-size:27.5px;line-height:33.0px;color:#5f666c;font-weight:400;letter-spacing:0px;">windows servers</div>
<div class="a" style="left:1590px;top:2032px;height:48px;border:2px solid #d0d3d8;border-radius:24px;padding:0 19px;display:flex;align-items:center;white-space:nowrap;font-size:24.5px;background:#fff"><span style="color:#474c52">OS</span><span style="color:#474c52;margin:0 3px 0 4px">:</span><span style="color:#3b4045;font-weight:700;letter-spacing:0px">window</span></div>
<div class="t" style="left:1999px;top:2039.44px;font-size:27px;line-height:32.4px;color:#5f666c;font-weight:400;letter-spacing:0.6px;">2024-07-31 16:43:49</div>
<div class="t" style="left:2358.7px;top:2039.44px;font-size:27px;line-height:32.4px;color:#5f666c;font-weight:400;letter-spacing:0.6px;">2024-08-09 12:37:42</div>
<div class="a" style="left:562px;top:2174px;width:2194px;height:2px;background:#dcdfe3"></div>
<div class="a" style="left:581px;top:2119px;width:32px;height:32px;border:2px solid #cfd2d6;border-radius:3px;background:#fff"></div>
<div class="t" style="left:659px;top:2118.97px;font-size:27.5px;line-height:33.0px;color:#5f666c;font-weight:400;letter-spacing:-0.6px;">TELNET/FTP Test</div>
<div class="t" style="left:1019.5px;top:2118.97px;font-size:27.5px;line-height:33.0px;color:#5f666c;font-weight:400;letter-spacing:0px;">-</div>
<div class="a" style="left:1590px;top:2112px;height:48px;border:2px solid #d0d3d8;border-radius:24px;padding:0 19px;display:flex;align-items:center;white-space:nowrap;font-size:24.5px;background:#fff"><span style="color:#474c52">Type</span><span style="color:#474c52;margin:0 3px 0 4px">:</span><span style="color:#3b4045;font-weight:700;letter-spacing:0px">1</span></div>
<div class="t" style="left:1999px;top:2119.44px;font-size:27px;line-height:32.4px;color:#5f666c;font-weight:400;letter-spacing:0.6px;">2024-07-31 14:28:29</div>
<div class="t" style="left:2358.7px;top:2119.44px;font-size:27px;line-height:32.4px;color:#5f666c;font-weight:400;letter-spacing:0.6px;">2024-08-28 16:28:14</div>
<div class="t" style="left:602.7px;top:2323.66px;font-size:25.5px;line-height:30.6px;color:#5f666c;font-weight:400;letter-spacing:0px;">1 - 21 of 21</div>
<svg style="left:2588px;top:2327px" width="16" height="22" viewBox="0 0 16 22">
<path d="M14 1.5 L2.5 11 L14 20.5" fill="none" stroke="#a9adb2" stroke-width="2"/></svg>
<div class="a" style="left:2620px;top:2315px;width:48px;height:48px;border:2px solid #3d70dc;border-radius:9px;background:#fff"></div>
<div class="t" style="left:2637px;top:2323.39px;font-size:26px;line-height:31.2px;color:#3d70dc;font-weight:400;letter-spacing:0px;-webkit-text-stroke:0.5px #3d70dc">1</div>
<svg style="left:2685px;top:2327px" width="16" height="22" viewBox="0 0 16 22">
<path d="M2 1.5 L13.5 11 L2 20.5" fill="none" stroke="#a9adb2" stroke-width="2"/></svg>
</body></html>
